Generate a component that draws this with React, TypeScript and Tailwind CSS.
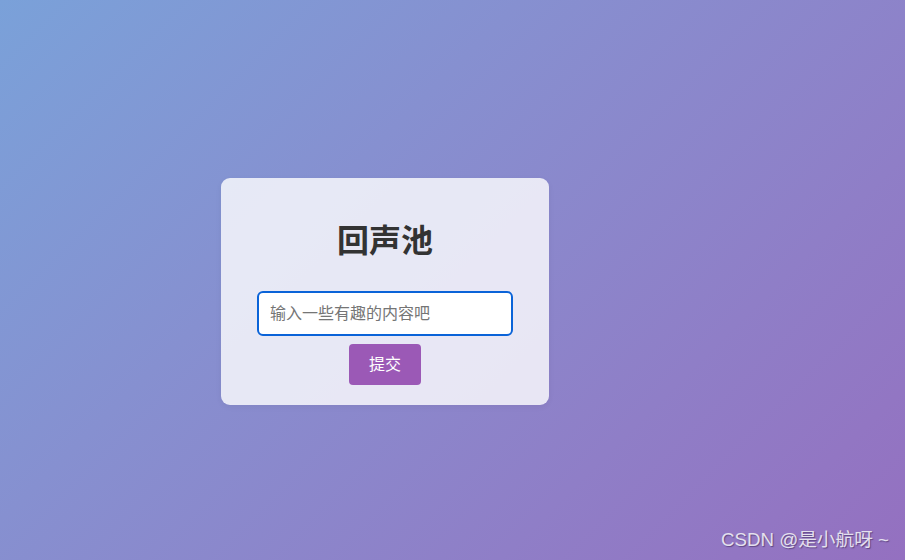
import React from "react";

export default function App() {
  return (
    <div
      className="relative w-[905px] h-[560px] overflow-hidden bg-linear-135 from-[#7aa1d9] to-[#9470c0] pt-[178px] pl-[221px]"
      style={{ fontFamily: '"Liberation Sans", "Noto Sans CJK SC", sans-serif' }}
    >
      <div className="w-[328px] h-[227px] rounded-[9px] bg-white/80 shadow-[0_2px_6px_rgba(0,0,0,0.05)] flex flex-col items-center pt-[44px]">
        <h1 className="text-[32px] leading-[38px] font-bold text-[#333333] m-0">回声池</h1>
        <input
          type="text"
          placeholder="输入一些有趣的内容吧"
          className="mt-[31px] w-[256px] h-[45px] rounded-[6px] border-2 border-[#0a63d8] bg-white pl-[11px] pr-[12px] text-[16px] text-[#333] placeholder:text-[#757575] outline-none"
        />
        <button className="mt-[8px] w-[72px] h-[41px] rounded-[4px] bg-[#9b59b6] text-white text-[16px]">
          提交
        </button>
      </div>
      <div className="absolute right-[16px] bottom-[8px] text-[18.7px] leading-[24px] text-[#e4e0ee] [text-shadow:1px_1px_1px_rgba(60,40,90,0.6)]">
        CSDN @是小航呀 ~
      </div>
    </div>
  );
}
